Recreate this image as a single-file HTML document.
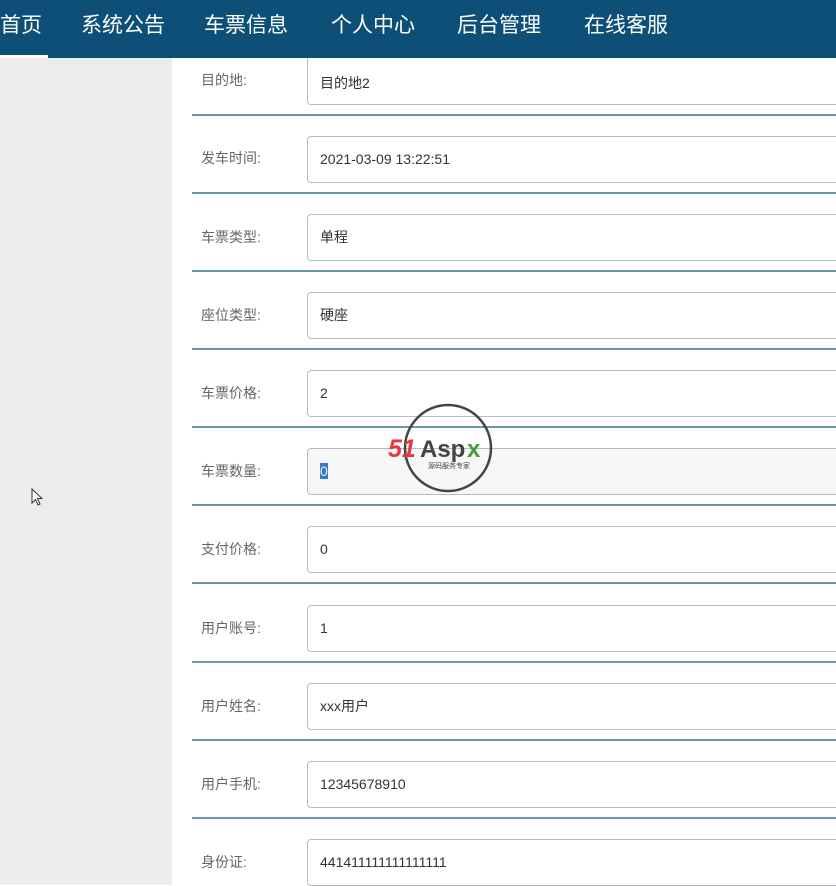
<!DOCTYPE html><html><head><meta charset="utf-8"><style>
body{margin:0;width:836px;height:885px;overflow:hidden;background:#fff;font-family:"Liberation Sans","Noto Sans CJK SC",sans-serif;position:relative}
.nav{position:absolute;left:0;top:0;width:836px;height:58px;background:#0d4f77}
.nav span{position:absolute;top:12px;color:#fff;font-size:21px;line-height:28px}
.ul{position:absolute;left:0;top:55px;width:48px;height:3px;background:#fff}
.side{position:absolute;left:0;top:58px;width:172px;height:827px;background:#ececec}
.sep{position:absolute;left:192px;width:644px;height:2px;background:#6b98a8}
.lab{position:absolute;left:201px;font-size:14px;color:#666}
.inp{position:absolute;left:307px;width:540px;height:47px;border:1px solid #b8bcc0;border-radius:4px;box-sizing:border-box;font-size:14px;color:#333;padding-left:12px;line-height:45px;background:#fff}
</style></head><body>
<div class="nav"><span style="left:0">首页</span><span style="left:81px">系统公告</span><span style="left:204px">车票信息</span><span style="left:331px">个人中心</span><span style="left:457px">后台管理</span><span style="left:584px">在线客服</span><div class="ul"></div></div>
<div class="side"></div>
<div class="inp" style="top:58px;height:47px;border-top:none;border-radius:0 0 4px 4px;line-height:50px">目的地2</div><div class="lab" style="top:70px">目的地:</div>
<div class="sep" style="top:114px"></div>
<div class="lab" style="top:148px">发车时间:</div><div class="inp" style="top:136px">2021-03-09 13:22:51</div>
<div class="sep" style="top:192px"></div>
<div class="lab" style="top:227px">车票类型:</div><div class="inp" style="top:214px">单程</div>
<div class="sep" style="top:270px"></div>
<div class="lab" style="top:305px">座位类型:</div><div class="inp" style="top:292px">硬座</div>
<div class="sep" style="top:348px"></div>
<div class="lab" style="top:383px">车票价格:</div><div class="inp" style="top:370px">2</div>
<div class="sep" style="top:426px"></div>
<div class="lab" style="top:461px">车票数量:</div><div class="inp" style="top:448px;background:#f6f7f8"><span style="background:#3a78c8;color:#cfe">0</span></div>
<div class="sep" style="top:504px"></div>
<div class="lab" style="top:539px">支付价格:</div><div class="inp" style="top:526px">0</div>
<div class="sep" style="top:582px"></div>
<div class="lab" style="top:618px">用户账号:</div><div class="inp" style="top:605px">1</div>
<div class="sep" style="top:661px"></div>
<div class="lab" style="top:696px">用户姓名:</div><div class="inp" style="top:683px">xxx用户</div>
<div class="sep" style="top:739px"></div>
<div class="lab" style="top:774px">用户手机:</div><div class="inp" style="top:761px">12345678910</div>
<div class="sep" style="top:817px"></div>
<div class="lab" style="top:852px">身份证:</div><div class="inp" style="top:839px">441411111111111111</div>
<svg style="position:absolute;left:386px;top:402px" width="126" height="94"><circle cx="62" cy="46" r="43" fill="none" stroke="#444" stroke-width="2.5"/><text x="2" y="55" font-size="25" font-weight="bold" font-style="italic" fill="#e8383d" font-family="Liberation Sans">51</text><text x="34" y="55" font-size="24" font-weight="bold" fill="#444" font-family="Liberation Sans">Asp</text><text x="81" y="55" font-size="24" font-weight="bold" fill="#4a9a3a" font-family="Liberation Sans">x</text><text x="42" y="66" font-size="7" fill="#444">源码服务专家</text></svg>
<svg style="position:absolute;left:31px;top:488px" width="14" height="20"><path d="M1 1 L1 15 L4.5 11.5 L7 17 L9 16 L6.5 10.5 L11 10.5 Z" fill="#fff" stroke="#333"/></svg>
</body></html>
